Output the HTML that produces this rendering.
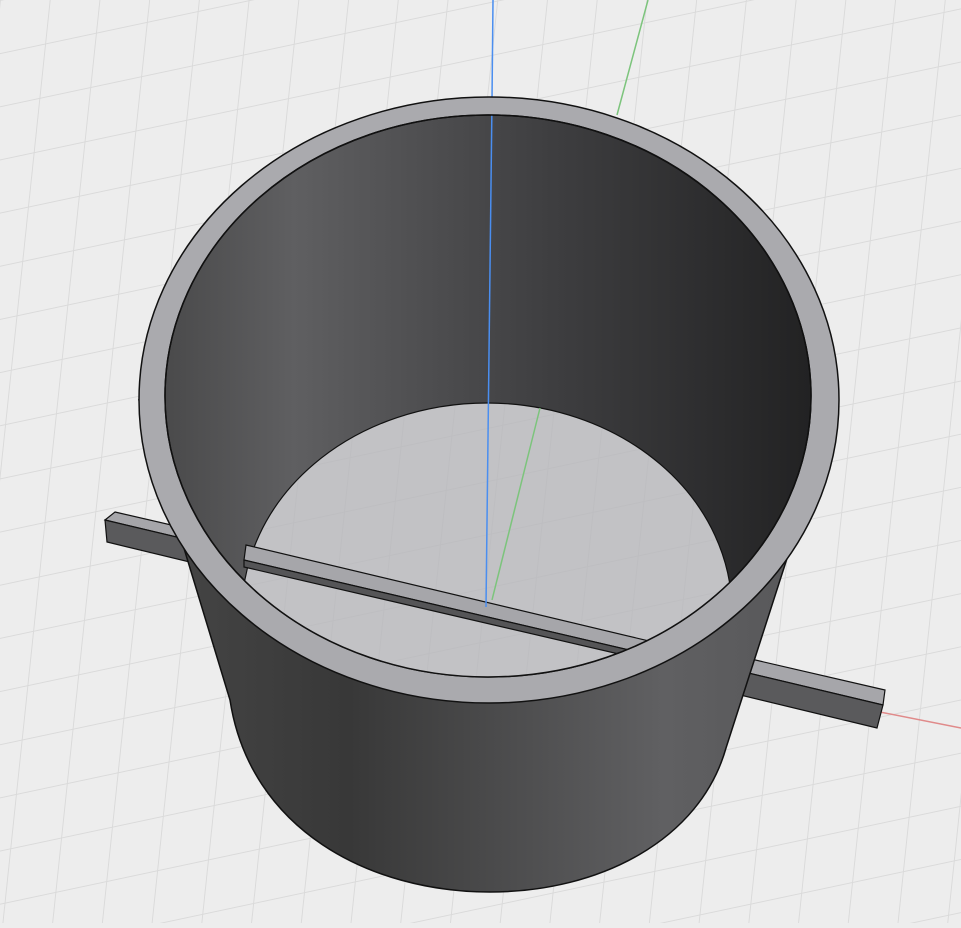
<!DOCTYPE html>
<html><head><style>html,body{margin:0;padding:0;background:#ededed;overflow:hidden}</style></head>
<body>
<svg width="961" height="923" viewBox="0 0 961 923" xmlns="http://www.w3.org/2000/svg">
<defs>
<pattern id="g" width="52" height="52" patternUnits="userSpaceOnUse" patternTransform="rotate(-12) skewX(-18)">
<rect width="52" height="52" fill="#ededed"/>
<path d="M0 0H52M0 0V52" stroke="#dadada" stroke-width="2"/>
</pattern>
<linearGradient id="inner" x1="0" x2="1" y1="0" y2="0">
<stop offset="0" stop-color="#4a4a4b"/><stop offset="0.2" stop-color="#5f5f61"/>
<stop offset="0.6" stop-color="#3e3e40"/><stop offset="1" stop-color="#222223"/>
</linearGradient>
<linearGradient id="outer" x1="0" x2="1" y1="0" y2="0">
<stop offset="0" stop-color="#474747"/><stop offset="0.3" stop-color="#383838"/>
<stop offset="0.75" stop-color="#606062"/><stop offset="1" stop-color="#555557"/>
</linearGradient>
<clipPath id="ci"><ellipse cx="488" cy="396" rx="323" ry="281"/></clipPath>
</defs>
<rect width="961" height="923" fill="url(#g)"/>
<line x1="880" y1="712" x2="961" y2="728" stroke="#e08a8a" stroke-width="1.5"/>
<line x1="648" y1="0" x2="617" y2="115" stroke="#7cc47c" stroke-width="1.5"/>
<line x1="493" y1="0" x2="492" y2="100" stroke="#4a8ef0" stroke-width="1.5"/>
<!-- bar -->
<polygon points="115,512 885,690 883,705 105,520" fill="#a6a6aa" stroke="#111" stroke-width="1.2"/>
<polygon points="105,520 883,705 877,728 107,542" fill="#5a5a5c" stroke="#111" stroke-width="1.2"/>
<!-- body -->
<path d="M139,400 L230,700 C250,830 370,892 490,892 C600,892 700,840 726,748 L838,400 Z" fill="url(#outer)" stroke="#111" stroke-width="1.5"/>
<!-- rim -->
<ellipse cx="489" cy="400" rx="350" ry="303" fill="#aaaaae" stroke="#111" stroke-width="1.5"/>
<ellipse cx="488" cy="396" rx="323" ry="281" fill="url(#inner)" stroke="#111" stroke-width="1.5"/>
<g clip-path="url(#ci)">
<ellipse cx="487" cy="612" rx="245" ry="209" fill="url(#g)"/>
<ellipse cx="487" cy="612" rx="245" ry="209" fill="#b6b6ba" opacity="0.8"/>
<ellipse cx="487" cy="612" rx="245" ry="209" fill="none" stroke="#111" stroke-width="1.2"/>
<line x1="540" y1="408" x2="492" y2="600" stroke="#7cc47c" stroke-width="1.5"/>
<polygon points="246,545 800,677 800,690 244,560" fill="#a6a6aa" stroke="#111" stroke-width="1.2"/>
<polygon points="244,560 800,690 800,696 244,567" fill="#555557" stroke="#111" stroke-width="1.2"/>
<line x1="492" y1="100" x2="486" y2="607" stroke="#4a8ef0" stroke-width="1.5"/>
</g>
<ellipse cx="488" cy="396" rx="323" ry="281" fill="none" stroke="#111" stroke-width="1.5"/>
</svg>
</body></html>
